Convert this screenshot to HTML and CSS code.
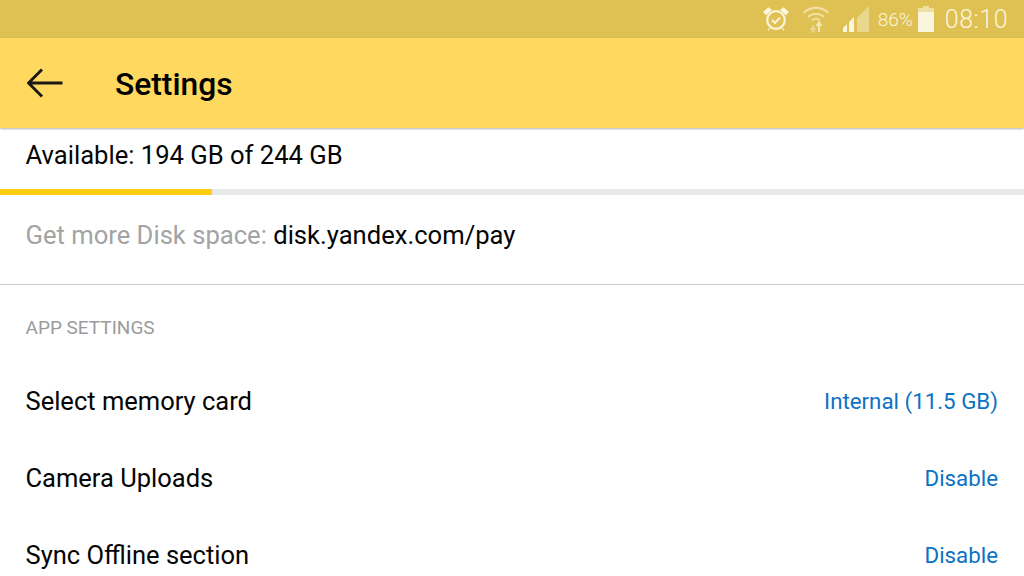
FILE: index.html
```html
<!DOCTYPE html>
<html lang="en">
<head>
<meta charset="utf-8">
<title>Settings</title>
<link rel="stylesheet" href="styles.css">
</head>
<body>
<div class="status">
  <svg class="ic-alarm" viewBox="0 0 26 26" width="26" height="26"><circle cx="13" cy="14" r="8.800" fill="none" stroke="#fbf5dd" stroke-width="2.200"/><path d="M9 14l3 3 5-5.500" fill="none" stroke="#fbf5dd" stroke-width="2"/><path d="M1 6l4.500-4 2.500 2-5 4.500zM25 6l-4.500-4-2.500 2 5 4.500zM7 22l-2 2.500M19 22l2 2.500" fill="#fbf5dd" stroke="#fbf5dd" stroke-width="1.200"/></svg>
  <svg class="ic-wifi" viewBox="0 0 28 28" width="28" height="28"><path d="M1.500 8a18 18 0 0 1 25 0M6 12a11.500 11.500 0 0 1 16 0M10 15.500a5.500 5.500 0 0 1 8 0" fill="none" stroke="#efdfa0" stroke-width="2.200"/><path d="M11 27v-7M8.500 23l2.500 3.500 2.500-3.500" fill="none" stroke="#e9d78e" stroke-width="2"/><path d="M17 27v-9M14.500 21l2.500-3.500 2.500 3.500" fill="none" stroke="#f3e7b8" stroke-width="2"/></svg>
  <svg class="ic-signal" viewBox="0 0 26 26" width="26" height="26"><path d="M26 0v26H14V12z" fill="#e9d78e"/><path d="M0 26v-4l4-4v8zM6 26V16l5-5v15z" fill="#fbf5dd"/></svg>
  <span class="pct">86%</span>
  <svg class="ic-batt" viewBox="0 0 16 26" width="16" height="26"><path d="M5 0h6v2h5v24H0V2h5z" fill="#efdfa0"/><path d="M0 6h16v20H0z" fill="#fbf5dd"/></svg>
  <span class="clock">08:10</span>
</div>
<header class="toolbar">
  <svg class="back" viewBox="0 0 36 30" width="36" height="30"><path d="M1.500 15h34M15 1.500L1.500 15 15 28.500" fill="none" stroke="#1a1a14" stroke-width="3"/></svg>
  <h1 class="title">Settings</h1>
</header>
<main class="content">
  <p class="avail">Available: 194 GB of 244 GB</p>
  <div class="bar"><div class="bar-fill"></div></div>
  <p class="more"><span class="muted">Get more Disk space:</span> disk.yandex.com/pay</p>
  <div class="section">
    <h2 class="section-title">APP SETTINGS</h2>
    <div class="row first"><span>Select memory card</span><span class="val">Internal (11.5 GB)</span></div>
    <div class="row"><span>Camera Uploads</span><span class="val">Disable</span></div>
    <div class="row"><span>Sync Offline section</span><span class="val">Disable</span></div>
  </div>
</main>
</body>
</html>
```

FILE: styles.css
```css
* { box-sizing: border-box; }
html, body { margin: 0; height: 100%; }
body {
  width: 1024px;
  height: 576px;
  overflow: hidden;
  background: #fff;
  font-family: Roboto, "Liberation Sans", sans-serif;
  color: #050505;
}
.status {
  height: 38px;
  background: #dfc153;
  display: flex;
  align-items: center;
  justify-content: flex-end;
  padding-right: 16px;
  color: #fbf5dd;
}
.ic-alarm { margin-right: 13px; }
.ic-wifi { margin-right: 13px; }
.ic-signal { margin-right: 9px; }
.pct { font-size: 19px; font-weight: 300; margin-right: 5px; }
.ic-batt { margin-right: 11px; }
.clock { font-size: 25px; font-weight: 300; letter-spacing: 0.5px; }
.toolbar {
  height: 90px;
  background: #ffd95f;
  display: flex;
  align-items: center;
  padding-left: 27px;
  box-shadow: 0 1px 2px rgba(0,0,0,.3);
  position: relative;
}
.back { margin-right: 52px; }
.title { margin: 2px 0 0; font-size: 31.800px; font-weight: 500; color: #000; }
.avail { margin: 0; padding: 11px 25.500px 0; font-size: 25.600px; line-height: 32px; height: 61px; }
.bar { height: 6px; background: #e9e9e9; }
.bar-fill { width: 212px; height: 100%; background: #ffcf0e; }
.more {
  margin: 0;
  height: 90px;
  padding: 24px 25.500px 0;
  font-size: 25.600px;
  line-height: 32px;
  border-bottom: 1px solid #c9c9c9;
}
.muted { color: #a3a3a3; }
.section { padding: 0 26px 0 25.500px; }
.section-title { margin: 0; padding-top: 32px; font-size: 19px; line-height: 22px; font-weight: 400; color: #9b9b9b; }
.row {
  height: 77px;
  display: flex;
  align-items: center;
  justify-content: space-between;
  font-size: 25.500px;
}
.first { margin-top: 23px; }
.val { color: #0b72c4; font-size: 22.300px; }
```
